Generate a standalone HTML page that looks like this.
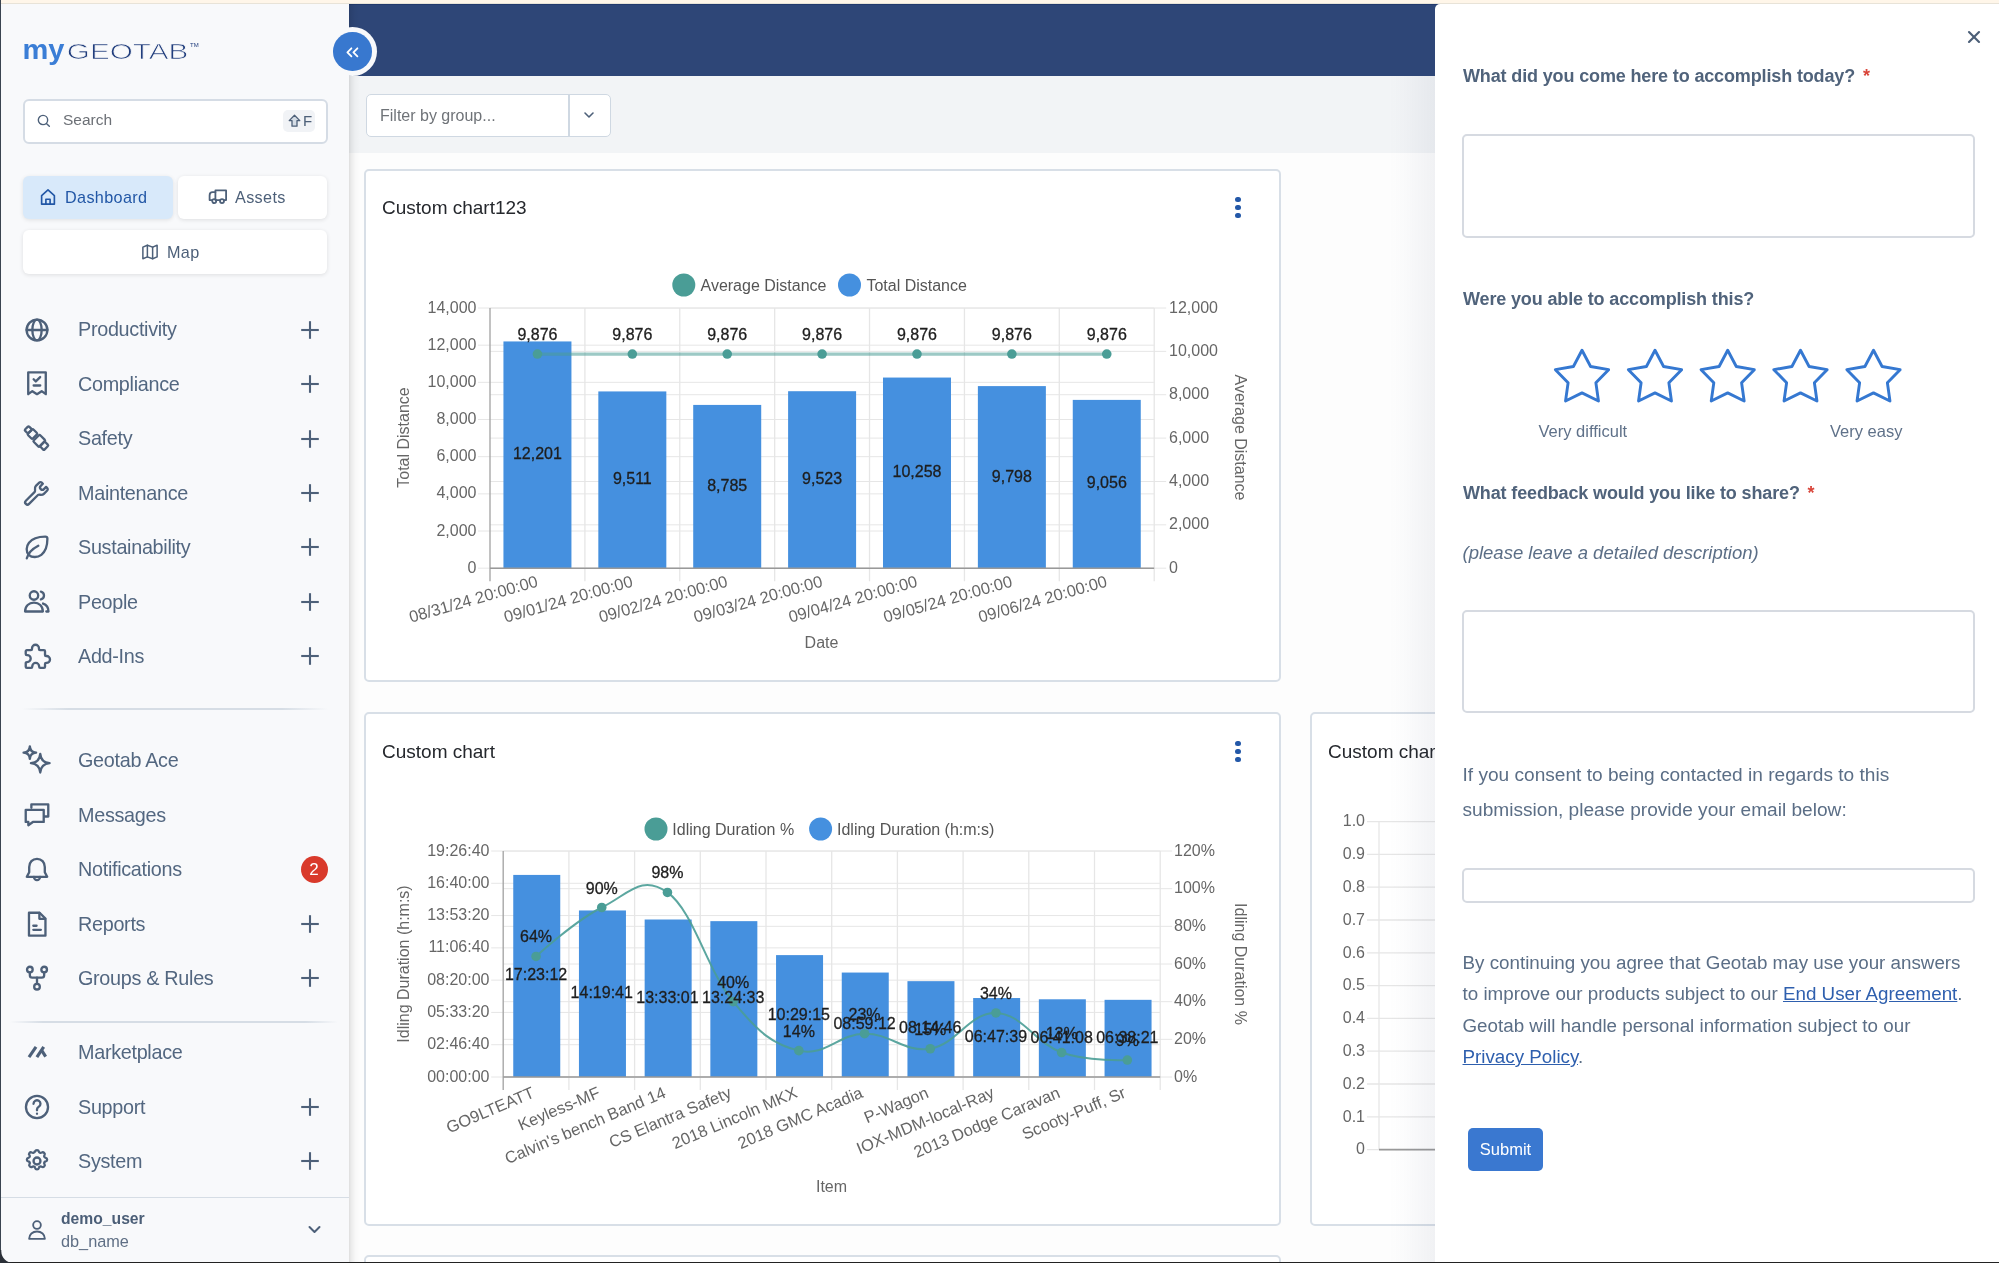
<!DOCTYPE html><html><head><meta charset="utf-8"><title>MyGeotab</title><style>
*{margin:0;padding:0;box-sizing:border-box}
html,body{width:1999px;height:1263px;overflow:hidden;background:#fdfdfd;font-family:"Liberation Sans",sans-serif}
.wrap{position:absolute;left:0;top:0;width:1999px;height:1263px;will-change:transform}
.abs{position:absolute}
.nav{font-size:19.8px;color:#536780;line-height:23px;white-space:nowrap;letter-spacing:-0.3px}
.badge{width:27px;height:27px;border-radius:50%;background:#d93a2b;color:#fff;font-size:17px;line-height:27px;text-align:center}
.card{position:absolute;background:#fff;border:2px solid #d8dfe7;border-radius:5px}
.ctitle{position:absolute;font-size:19px;color:#25282d;white-space:nowrap;line-height:22px}
svg text{font-family:"Liberation Sans",sans-serif}
.al{font-size:16px;fill:#666}
.dl{font-size:16px;fill:#1e1e1e;stroke:#1e1e1e;stroke-width:0.3px}
.at{font-size:16px;fill:#666}
.lg{font-size:16px;fill:#555}
.plab{position:absolute;left:1463px;font-size:18px;font-weight:bold;color:#50637b;letter-spacing:-0.14px;white-space:nowrap;line-height:22px}
.ptxt{position:absolute;left:1462.5px;font-size:18.8px;color:#5b6e86;white-space:nowrap;line-height:22px}
.req{color:#d9463b;margin-left:3px}
.inp{position:absolute;left:1462px;width:513px;background:#fff;border:2px solid #d6dae1;border-radius:5px}
a{color:#2e5fae;text-decoration:underline}
</style></head><body><div class="wrap">
<div class="abs" style="left:349px;top:76px;width:1086px;height:77px;background:#f2f4f6"></div>
<div class="abs" style="left:349px;top:4px;width:1150px;height:72px;background:#2e4677"></div>
<div class="abs" style="left:349px;top:4px;width:1150px;height:1.2px;background:#223a6c"></div>
<div class="abs" style="left:349px;top:4px;width:11px;height:1259px;background:linear-gradient(to right,rgba(0,0,0,0.12),rgba(0,0,0,0.07) 20%,rgba(0,0,0,0.025) 55%,rgba(0,0,0,0))"></div>
<div class="abs" style="left:366px;top:94px;width:245px;height:43px;background:#fff;border:1.5px solid #cfd8e2;border-radius:5px"></div>
<div class="abs" style="left:568px;top:95px;width:1.5px;height:41px;background:#cfd8e2"></div>
<div class="abs" style="left:380px;top:105.3px;font-size:16px;color:#6f7378;line-height:22px;white-space:nowrap">Filter by group...</div>
<svg class="abs" style="left:583px;top:110px" width="12" height="10" viewBox="0 0 12 10" fill="none" stroke="#4d6079" stroke-width="1.6" stroke-linecap="round" stroke-linejoin="round"><path d="M2 3L6 7L10 3"/></svg>
<div class="card" style="left:364px;top:168.5px;width:916.5px;height:513.5px"></div>
<div class="card" style="left:364px;top:711.8px;width:916.5px;height:514px"></div>
<div class="card" style="left:1309.7px;top:711.8px;width:500px;height:514px"></div>
<div class="card" style="left:364px;top:1255px;width:916.5px;height:100px"></div>
<div class="ctitle" style="left:382px;top:197.2px">Custom chart123</div>
<div class="ctitle" style="left:382px;top:741px">Custom chart</div>
<div class="ctitle" style="left:1328px;top:741px">Custom chart</div>
<div class="abs" style="left:1235.3px;top:196.7px;width:5.6px;height:5.6px;border-radius:50%;background:#2358a8"></div>
<div class="abs" style="left:1235.3px;top:204.7px;width:5.6px;height:5.6px;border-radius:50%;background:#2358a8"></div>
<div class="abs" style="left:1235.3px;top:212.7px;width:5.6px;height:5.6px;border-radius:50%;background:#2358a8"></div>
<div class="abs" style="left:1235.3px;top:740.7px;width:5.6px;height:5.6px;border-radius:50%;background:#2358a8"></div>
<div class="abs" style="left:1235.3px;top:748.7px;width:5.6px;height:5.6px;border-radius:50%;background:#2358a8"></div>
<div class="abs" style="left:1235.3px;top:756.7px;width:5.6px;height:5.6px;border-radius:50%;background:#2358a8"></div>
<svg class="abs" style="left:0;top:0" width="1999" height="1263" viewBox="0 0 1999 1263"><line x1="478" y1="568.2" x2="1154.2" y2="568.2" stroke="#e6e6e6" stroke-width="1"/>
<text x="476.5" y="572.8" text-anchor="end" class="al">0</text>
<line x1="478" y1="531.03" x2="1154.2" y2="531.03" stroke="#e6e6e6" stroke-width="1"/>
<text x="476.5" y="535.63" text-anchor="end" class="al">2,000</text>
<line x1="478" y1="493.86" x2="1154.2" y2="493.86" stroke="#e6e6e6" stroke-width="1"/>
<text x="476.5" y="498.46" text-anchor="end" class="al">4,000</text>
<line x1="478" y1="456.69" x2="1154.2" y2="456.69" stroke="#e6e6e6" stroke-width="1"/>
<text x="476.5" y="461.29" text-anchor="end" class="al">6,000</text>
<line x1="478" y1="419.51" x2="1154.2" y2="419.51" stroke="#e6e6e6" stroke-width="1"/>
<text x="476.5" y="424.11" text-anchor="end" class="al">8,000</text>
<line x1="478" y1="382.34" x2="1154.2" y2="382.34" stroke="#e6e6e6" stroke-width="1"/>
<text x="476.5" y="386.94" text-anchor="end" class="al">10,000</text>
<line x1="478" y1="345.17" x2="1154.2" y2="345.17" stroke="#e6e6e6" stroke-width="1"/>
<text x="476.5" y="349.77" text-anchor="end" class="al">12,000</text>
<line x1="478" y1="308" x2="1154.2" y2="308" stroke="#e6e6e6" stroke-width="1"/>
<text x="476.5" y="312.6" text-anchor="end" class="al">14,000</text>
<line x1="490" y1="568.2" x2="1166.2" y2="568.2" stroke="#e6e6e6" stroke-width="1"/>
<text x="1169" y="572.8" class="al">0</text>
<line x1="490" y1="524.83" x2="1166.2" y2="524.83" stroke="#e6e6e6" stroke-width="1"/>
<text x="1169" y="529.43" class="al">2,000</text>
<line x1="490" y1="481.47" x2="1166.2" y2="481.47" stroke="#e6e6e6" stroke-width="1"/>
<text x="1169" y="486.07" class="al">4,000</text>
<line x1="490" y1="438.1" x2="1166.2" y2="438.1" stroke="#e6e6e6" stroke-width="1"/>
<text x="1169" y="442.7" class="al">6,000</text>
<line x1="490" y1="394.73" x2="1166.2" y2="394.73" stroke="#e6e6e6" stroke-width="1"/>
<text x="1169" y="399.33" class="al">8,000</text>
<line x1="490" y1="351.37" x2="1166.2" y2="351.37" stroke="#e6e6e6" stroke-width="1"/>
<text x="1169" y="355.97" class="al">10,000</text>
<line x1="490" y1="308" x2="1166.2" y2="308" stroke="#e6e6e6" stroke-width="1"/>
<text x="1169" y="312.6" class="al">12,000</text>
<line x1="584.89" y1="308" x2="584.89" y2="581.2" stroke="#e6e6e6" stroke-width="1.3"/>
<line x1="679.77" y1="308" x2="679.77" y2="581.2" stroke="#e6e6e6" stroke-width="1.3"/>
<line x1="774.66" y1="308" x2="774.66" y2="581.2" stroke="#e6e6e6" stroke-width="1.3"/>
<line x1="869.54" y1="308" x2="869.54" y2="581.2" stroke="#e6e6e6" stroke-width="1.3"/>
<line x1="964.43" y1="308" x2="964.43" y2="581.2" stroke="#e6e6e6" stroke-width="1.3"/>
<line x1="1059.31" y1="308" x2="1059.31" y2="581.2" stroke="#e6e6e6" stroke-width="1.3"/>
<line x1="1154.2" y1="308" x2="1154.2" y2="581.2" stroke="#e6e6e6" stroke-width="1.3"/>
<line x1="490" y1="308" x2="490" y2="581.2" stroke="#a8a8a8" stroke-width="1.4"/>
<rect x="503.44" y="341.44" width="68" height="226.76" fill="#4590df"/>
<rect x="598.33" y="391.43" width="68" height="176.77" fill="#4590df"/>
<rect x="693.21" y="404.92" width="68" height="163.28" fill="#4590df"/>
<rect x="788.1" y="391.21" width="68" height="176.99" fill="#4590df"/>
<rect x="882.99" y="377.55" width="68" height="190.65" fill="#4590df"/>
<rect x="977.87" y="386.1" width="68" height="182.1" fill="#4590df"/>
<rect x="1072.76" y="399.89" width="68" height="168.31" fill="#4590df"/>
<line x1="490" y1="568.2" x2="1154.2" y2="568.2" stroke="#999" stroke-width="1.6"/>
<path d="M537.44 354.06 L632.33 354.06 L727.21 354.06 L822.1 354.06 L916.99 354.06 L1011.87 354.06 L1106.76 354.06" fill="none" stroke="#4a9d96" stroke-opacity="0.55" stroke-width="3.2"/>
<circle cx="537.44" cy="354.06" r="4.8" fill="#4a9d96"/>
<circle cx="632.33" cy="354.06" r="4.8" fill="#4a9d96"/>
<circle cx="727.21" cy="354.06" r="4.8" fill="#4a9d96"/>
<circle cx="822.1" cy="354.06" r="4.8" fill="#4a9d96"/>
<circle cx="916.99" cy="354.06" r="4.8" fill="#4a9d96"/>
<circle cx="1011.87" cy="354.06" r="4.8" fill="#4a9d96"/>
<circle cx="1106.76" cy="354.06" r="4.8" fill="#4a9d96"/>
<text x="537.44" y="459.22" text-anchor="middle" class="dl">12,201</text>
<text x="632.33" y="484.22" text-anchor="middle" class="dl">9,511</text>
<text x="727.21" y="490.96" text-anchor="middle" class="dl">8,785</text>
<text x="822.1" y="484.1" text-anchor="middle" class="dl">9,523</text>
<text x="916.99" y="477.27" text-anchor="middle" class="dl">10,258</text>
<text x="1011.87" y="481.55" text-anchor="middle" class="dl">9,798</text>
<text x="1106.76" y="488.44" text-anchor="middle" class="dl">9,056</text>
<text x="537.44" y="339.56" text-anchor="middle" class="dl">9,876</text>
<text x="632.33" y="339.56" text-anchor="middle" class="dl">9,876</text>
<text x="727.21" y="339.56" text-anchor="middle" class="dl">9,876</text>
<text x="822.1" y="339.56" text-anchor="middle" class="dl">9,876</text>
<text x="916.99" y="339.56" text-anchor="middle" class="dl">9,876</text>
<text x="1011.87" y="339.56" text-anchor="middle" class="dl">9,876</text>
<text x="1106.76" y="339.56" text-anchor="middle" class="dl">9,876</text>
<text x="538.84" y="586.2" text-anchor="end" class="al" style="font-size:16.5px" transform="rotate(-16 538.84 586.2)">08/31/24 20:00:00</text>
<text x="633.73" y="586.2" text-anchor="end" class="al" style="font-size:16.5px" transform="rotate(-16 633.73 586.2)">09/01/24 20:00:00</text>
<text x="728.61" y="586.2" text-anchor="end" class="al" style="font-size:16.5px" transform="rotate(-16 728.61 586.2)">09/02/24 20:00:00</text>
<text x="823.5" y="586.2" text-anchor="end" class="al" style="font-size:16.5px" transform="rotate(-16 823.5 586.2)">09/03/24 20:00:00</text>
<text x="918.39" y="586.2" text-anchor="end" class="al" style="font-size:16.5px" transform="rotate(-16 918.39 586.2)">09/04/24 20:00:00</text>
<text x="1013.27" y="586.2" text-anchor="end" class="al" style="font-size:16.5px" transform="rotate(-16 1013.27 586.2)">09/05/24 20:00:00</text>
<text x="1108.16" y="586.2" text-anchor="end" class="al" style="font-size:16.5px" transform="rotate(-16 1108.16 586.2)">09/06/24 20:00:00</text>
<text x="409" y="437.5" text-anchor="middle" class="at" transform="rotate(-90 409 437.5)">Total Distance</text>
<text x="1235" y="437.5" text-anchor="middle" class="at" transform="rotate(90 1235 437.5)">Average Distance</text>
<text x="821.5" y="648" text-anchor="middle" class="at">Date</text>
<circle cx="683.8" cy="285" r="11.5" fill="#4a9d96"/>
<text x="700.5" y="290.8" class="lg">Average Distance</text>
<circle cx="849.5" cy="285" r="11.5" fill="#4590df"/>
<text x="866.4" y="290.8" class="lg">Total Distance</text>
<line x1="491.2" y1="1077" x2="1160.2" y2="1077" stroke="#e6e6e6" stroke-width="1"/>
<text x="489.5" y="1081.6" text-anchor="end" class="al">00:00:00</text>
<line x1="491.2" y1="1044.71" x2="1160.2" y2="1044.71" stroke="#e6e6e6" stroke-width="1"/>
<text x="489.5" y="1049.31" text-anchor="end" class="al">02:46:40</text>
<line x1="491.2" y1="1012.43" x2="1160.2" y2="1012.43" stroke="#e6e6e6" stroke-width="1"/>
<text x="489.5" y="1017.03" text-anchor="end" class="al">05:33:20</text>
<line x1="491.2" y1="980.14" x2="1160.2" y2="980.14" stroke="#e6e6e6" stroke-width="1"/>
<text x="489.5" y="984.74" text-anchor="end" class="al">08:20:00</text>
<line x1="491.2" y1="947.86" x2="1160.2" y2="947.86" stroke="#e6e6e6" stroke-width="1"/>
<text x="489.5" y="952.46" text-anchor="end" class="al">11:06:40</text>
<line x1="491.2" y1="915.57" x2="1160.2" y2="915.57" stroke="#e6e6e6" stroke-width="1"/>
<text x="489.5" y="920.17" text-anchor="end" class="al">13:53:20</text>
<line x1="491.2" y1="883.29" x2="1160.2" y2="883.29" stroke="#e6e6e6" stroke-width="1"/>
<text x="489.5" y="887.89" text-anchor="end" class="al">16:40:00</text>
<line x1="491.2" y1="851" x2="1160.2" y2="851" stroke="#e6e6e6" stroke-width="1"/>
<text x="489.5" y="855.6" text-anchor="end" class="al">19:26:40</text>
<line x1="503.2" y1="1077" x2="1172.2" y2="1077" stroke="#e6e6e6" stroke-width="1"/>
<text x="1174" y="1081.6" class="al">0%</text>
<line x1="503.2" y1="1039.33" x2="1172.2" y2="1039.33" stroke="#e6e6e6" stroke-width="1"/>
<text x="1174" y="1043.93" class="al">20%</text>
<line x1="503.2" y1="1001.67" x2="1172.2" y2="1001.67" stroke="#e6e6e6" stroke-width="1"/>
<text x="1174" y="1006.27" class="al">40%</text>
<line x1="503.2" y1="964" x2="1172.2" y2="964" stroke="#e6e6e6" stroke-width="1"/>
<text x="1174" y="968.6" class="al">60%</text>
<line x1="503.2" y1="926.33" x2="1172.2" y2="926.33" stroke="#e6e6e6" stroke-width="1"/>
<text x="1174" y="930.93" class="al">80%</text>
<line x1="503.2" y1="888.67" x2="1172.2" y2="888.67" stroke="#e6e6e6" stroke-width="1"/>
<text x="1174" y="893.27" class="al">100%</text>
<line x1="503.2" y1="851" x2="1172.2" y2="851" stroke="#e6e6e6" stroke-width="1"/>
<text x="1174" y="855.6" class="al">120%</text>
<line x1="568.9" y1="851" x2="568.9" y2="1090" stroke="#e6e6e6" stroke-width="1.3"/>
<line x1="634.6" y1="851" x2="634.6" y2="1090" stroke="#e6e6e6" stroke-width="1.3"/>
<line x1="700.3" y1="851" x2="700.3" y2="1090" stroke="#e6e6e6" stroke-width="1.3"/>
<line x1="766" y1="851" x2="766" y2="1090" stroke="#e6e6e6" stroke-width="1.3"/>
<line x1="831.7" y1="851" x2="831.7" y2="1090" stroke="#e6e6e6" stroke-width="1.3"/>
<line x1="897.4" y1="851" x2="897.4" y2="1090" stroke="#e6e6e6" stroke-width="1.3"/>
<line x1="963.1" y1="851" x2="963.1" y2="1090" stroke="#e6e6e6" stroke-width="1.3"/>
<line x1="1028.8" y1="851" x2="1028.8" y2="1090" stroke="#e6e6e6" stroke-width="1.3"/>
<line x1="1094.5" y1="851" x2="1094.5" y2="1090" stroke="#e6e6e6" stroke-width="1.3"/>
<line x1="1160.2" y1="851" x2="1160.2" y2="1090" stroke="#e6e6e6" stroke-width="1.3"/>
<line x1="503.2" y1="851" x2="503.2" y2="1090" stroke="#a8a8a8" stroke-width="1.4"/>
<rect x="513.25" y="874.92" width="47" height="202.08" fill="#4590df"/>
<rect x="578.95" y="910.47" width="47" height="166.53" fill="#4590df"/>
<rect x="644.65" y="919.51" width="47" height="157.49" fill="#4590df"/>
<rect x="710.35" y="921.15" width="47" height="155.85" fill="#4590df"/>
<rect x="776.05" y="955.11" width="47" height="121.89" fill="#4590df"/>
<rect x="841.75" y="972.55" width="47" height="104.45" fill="#4590df"/>
<rect x="907.45" y="981.16" width="47" height="95.84" fill="#4590df"/>
<rect x="973.15" y="998.03" width="47" height="78.97" fill="#4590df"/>
<rect x="1038.85" y="999.29" width="47" height="77.71" fill="#4590df"/>
<rect x="1104.55" y="999.83" width="47" height="77.17" fill="#4590df"/>
<line x1="503.2" y1="1077" x2="1160.2" y2="1077" stroke="#999" stroke-width="1.6"/>
<path d="M536.05 956.47 C536.05 956.47 575.47 920.31 601.75 907.5 C628.03 894.69 641.17 873.6 667.45 892.43 C693.73 911.27 706.87 970.03 733.15 1001.67 C759.43 1033.31 772.57 1044.23 798.85 1050.63 C825.13 1057.04 838.27 1034.06 864.55 1033.68 C890.83 1033.31 903.97 1052.89 930.25 1048.75 C956.53 1044.61 969.67 1012.21 995.95 1012.97 C1022.23 1013.72 1035.37 1043.1 1061.65 1052.52 C1087.93 1061.93 1127.35 1060.05 1127.35 1060.05" fill="none" stroke="#4a9d96" stroke-opacity="0.9" stroke-width="2"/>
<circle cx="536.05" cy="956.47" r="4.8" fill="#4a9d96"/>
<circle cx="601.75" cy="907.5" r="4.8" fill="#4a9d96"/>
<circle cx="667.45" cy="892.43" r="4.8" fill="#4a9d96"/>
<circle cx="733.15" cy="1001.67" r="4.8" fill="#4a9d96"/>
<circle cx="798.85" cy="1050.63" r="4.8" fill="#4a9d96"/>
<circle cx="864.55" cy="1033.68" r="4.8" fill="#4a9d96"/>
<circle cx="930.25" cy="1048.75" r="4.8" fill="#4a9d96"/>
<circle cx="995.95" cy="1012.97" r="4.8" fill="#4a9d96"/>
<circle cx="1061.65" cy="1052.52" r="4.8" fill="#4a9d96"/>
<circle cx="1127.35" cy="1060.05" r="4.8" fill="#4a9d96"/>
<text x="536.05" y="980.36" text-anchor="middle" class="dl">17:23:12</text>
<text x="601.75" y="998.13" text-anchor="middle" class="dl">14:19:41</text>
<text x="667.45" y="1002.65" text-anchor="middle" class="dl">13:33:01</text>
<text x="733.15" y="1003.47" text-anchor="middle" class="dl">13:24:33</text>
<text x="798.85" y="1020.45" text-anchor="middle" class="dl">10:29:15</text>
<text x="864.55" y="1029.17" text-anchor="middle" class="dl">08:59:12</text>
<text x="930.25" y="1033.48" text-anchor="middle" class="dl">08:14:46</text>
<text x="995.95" y="1041.92" text-anchor="middle" class="dl">06:47:39</text>
<text x="1061.65" y="1042.55" text-anchor="middle" class="dl">06:41:08</text>
<text x="1127.35" y="1042.82" text-anchor="middle" class="dl">06:38:21</text>
<text x="536.05" y="942.47" text-anchor="middle" class="dl">64%</text>
<text x="601.75" y="893.5" text-anchor="middle" class="dl">90%</text>
<text x="667.45" y="878.43" text-anchor="middle" class="dl">98%</text>
<text x="733.15" y="987.67" text-anchor="middle" class="dl">40%</text>
<text x="798.85" y="1036.63" text-anchor="middle" class="dl">14%</text>
<text x="864.55" y="1019.68" text-anchor="middle" class="dl">23%</text>
<text x="930.25" y="1034.75" text-anchor="middle" class="dl">15%</text>
<text x="995.95" y="998.97" text-anchor="middle" class="dl">34%</text>
<text x="1061.65" y="1038.52" text-anchor="middle" class="dl">13%</text>
<text x="1127.35" y="1046.05" text-anchor="middle" class="dl">9%</text>
<text x="535.55" y="1096.8" text-anchor="end" class="al" style="font-size:16.5px" transform="rotate(-23 535.55 1096.8)">GO9LTEATT</text>
<text x="601.25" y="1096.8" text-anchor="end" class="al" style="font-size:16.5px" transform="rotate(-23 601.25 1096.8)">Keyless-MF</text>
<text x="666.95" y="1096.8" text-anchor="end" class="al" style="font-size:16.5px" transform="rotate(-23 666.95 1096.8)">Calvin's bench Band 14</text>
<text x="732.65" y="1096.8" text-anchor="end" class="al" style="font-size:16.5px" transform="rotate(-23 732.65 1096.8)">CS Elantra Safety</text>
<text x="798.35" y="1096.8" text-anchor="end" class="al" style="font-size:16.5px" transform="rotate(-23 798.35 1096.8)">2018 Lincoln MKX</text>
<text x="864.05" y="1096.8" text-anchor="end" class="al" style="font-size:16.5px" transform="rotate(-23 864.05 1096.8)">2018 GMC Acadia</text>
<text x="929.75" y="1096.8" text-anchor="end" class="al" style="font-size:16.5px" transform="rotate(-23 929.75 1096.8)">P-Wagon</text>
<text x="995.45" y="1096.8" text-anchor="end" class="al" style="font-size:16.5px" transform="rotate(-23 995.45 1096.8)">IOX-MDM-local-Ray</text>
<text x="1061.15" y="1096.8" text-anchor="end" class="al" style="font-size:16.5px" transform="rotate(-23 1061.15 1096.8)">2013 Dodge Caravan</text>
<text x="1126.85" y="1096.8" text-anchor="end" class="al" style="font-size:16.5px" transform="rotate(-23 1126.85 1096.8)">Scooty-Puff, Sr</text>
<text x="409" y="964" text-anchor="middle" class="at" transform="rotate(-90 409 964)">Idling Duration (h:m:s)</text>
<text x="1235" y="964" text-anchor="middle" class="at" transform="rotate(90 1235 964)">Idling Duration %</text>
<text x="831.5" y="1192" text-anchor="middle" class="at">Item</text>
<circle cx="656" cy="829" r="11.5" fill="#4a9d96"/>
<text x="672.3" y="834.8" class="lg">Idling Duration %</text>
<circle cx="820.6" cy="829" r="11.5" fill="#4590df"/>
<text x="837" y="834.8" class="lg">Idling Duration (h:m:s)</text>
<line x1="1367" y1="1149.6" x2="1440" y2="1149.6" stroke="#e6e6e6" stroke-width="1.3"/>
<text x="1365" y="1154.3" text-anchor="end" class="al">0</text>
<line x1="1367" y1="1116.8" x2="1440" y2="1116.8" stroke="#e6e6e6" stroke-width="1.3"/>
<text x="1365" y="1121.5" text-anchor="end" class="al">0.1</text>
<line x1="1367" y1="1084" x2="1440" y2="1084" stroke="#e6e6e6" stroke-width="1.3"/>
<text x="1365" y="1088.7" text-anchor="end" class="al">0.2</text>
<line x1="1367" y1="1051.2" x2="1440" y2="1051.2" stroke="#e6e6e6" stroke-width="1.3"/>
<text x="1365" y="1055.9" text-anchor="end" class="al">0.3</text>
<line x1="1367" y1="1018.4" x2="1440" y2="1018.4" stroke="#e6e6e6" stroke-width="1.3"/>
<text x="1365" y="1023.1" text-anchor="end" class="al">0.4</text>
<line x1="1367" y1="985.6" x2="1440" y2="985.6" stroke="#e6e6e6" stroke-width="1.3"/>
<text x="1365" y="990.3" text-anchor="end" class="al">0.5</text>
<line x1="1367" y1="952.8" x2="1440" y2="952.8" stroke="#e6e6e6" stroke-width="1.3"/>
<text x="1365" y="957.5" text-anchor="end" class="al">0.6</text>
<line x1="1367" y1="920" x2="1440" y2="920" stroke="#e6e6e6" stroke-width="1.3"/>
<text x="1365" y="924.7" text-anchor="end" class="al">0.7</text>
<line x1="1367" y1="887.2" x2="1440" y2="887.2" stroke="#e6e6e6" stroke-width="1.3"/>
<text x="1365" y="891.9" text-anchor="end" class="al">0.8</text>
<line x1="1367" y1="854.4" x2="1440" y2="854.4" stroke="#e6e6e6" stroke-width="1.3"/>
<text x="1365" y="859.1" text-anchor="end" class="al">0.9</text>
<line x1="1367" y1="821.6" x2="1440" y2="821.6" stroke="#e6e6e6" stroke-width="1.3"/>
<text x="1365" y="826.3" text-anchor="end" class="al">1.0</text>
<line x1="1379" y1="821.6" x2="1379" y2="1149.6" stroke="#e6e6e6" stroke-width="1.3"/>
<line x1="1379" y1="1149.6" x2="1440" y2="1149.6" stroke="#999" stroke-width="1.6"/></svg>
<div class="abs" style="left:0;top:0;width:349px;height:1263px;background:#f8f9fb;border-right:0px solid #e3e6ea"></div>
<svg class="abs" style="left:20px;top:36px" width="185" height="34" viewBox="0 0 185 34"><text x="2.5" y="23" font-family="Liberation Sans" font-weight="bold" font-size="28.5" fill="#3b7ed6" textLength="42" lengthAdjust="spacingAndGlyphs">my</text><text x="46.8" y="23.2" font-family="Liberation Sans" font-size="22.4" fill="#213e7d" stroke="#f8f9fb" stroke-width="0.7" textLength="121.5" lengthAdjust="spacingAndGlyphs">GEOTAB</text><text x="170" y="11" font-family="Liberation Sans" font-size="6" fill="#1f3c7c">TM</text></svg>
<div class="abs" style="left:22.5px;top:98.5px;width:305px;height:45px;background:#fff;border:2px solid #d5dce5;border-radius:6px"></div>
<svg class="abs" style="left:35.5px;top:113px" width="16" height="16" viewBox="0 0 24 24" fill="none" stroke="#4d6079" stroke-width="2.1" stroke-linecap="round" stroke-linejoin="round" overflow="visible"><circle cx="10.5" cy="10.5" r="7"/><line x1="15.6" y1="15.6" x2="20" y2="20"/></svg>
<div class="abs" style="left:63px;top:109px;font-size:15.5px;color:#6c7076;line-height:22px">Search</div>
<div class="abs" style="left:283px;top:110px;width:32px;height:22px;background:#f1f3f6;border-radius:5px"></div>
<svg class="abs" style="left:288px;top:113.5px" width="13" height="14" viewBox="0 0 13 14" fill="#d5dde6" stroke="#4d6079" stroke-width="1.3" stroke-linejoin="round"><path d="M6.5 1.2L11.8 6.6H9V12.2H4V6.6H1.2Z"/></svg>
<div class="abs" style="left:303px;top:109.5px;font-size:15px;color:#4d6079;line-height:22px">F</div>
<div class="abs" style="left:23px;top:175.5px;width:150px;height:43.5px;background:#d8e9fa;border-radius:6px;box-shadow:0 1px 4px rgba(0,0,0,0.10)"></div>
<div class="abs" style="left:178px;top:175.5px;width:149px;height:43.5px;background:#fff;border-radius:6px;box-shadow:0 1px 4px rgba(0,0,0,0.11)"></div>
<div class="abs" style="left:23px;top:230px;width:304px;height:43.5px;background:#fff;border-radius:6px;box-shadow:0 1px 4px rgba(0,0,0,0.11)"></div>
<svg class="abs" style="left:39px;top:188px" width="18" height="18" viewBox="0 0 24 24" fill="none" stroke="#2257a6" stroke-width="2.2" stroke-linecap="round" stroke-linejoin="round" overflow="visible"><path d="M3.5 21.5V10.2L12 2.5L20.5 10.2V21.5Z"/><path d="M9.2 21.5V15H14.8V21.5"/></svg>
<div class="abs" style="left:65px;top:185.5px;font-size:16.2px;color:#2257a6;line-height:22px;letter-spacing:0.35px">Dashboard</div>
<svg class="abs" style="left:208px;top:188px" width="20" height="18" viewBox="0 0 20 18" fill="none" stroke="#4d6079" stroke-width="1.8" stroke-linecap="round" stroke-linejoin="round"><path d="M7.4 12.1V2.4H18.1V12.1H16.2"/><path d="M7.4 4.2H4.6C2.9 4.2 1.6 5.6 1.6 7.4V12.1H4.1"/><line x1="8.3" y1="12.1" x2="11.9" y2="12.1"/><circle cx="6.2" cy="13.1" r="2"/><circle cx="14" cy="13.1" r="2"/></svg>
<div class="abs" style="left:235px;top:185.5px;font-size:16.2px;color:#4d6079;line-height:22px;letter-spacing:0.35px">Assets</div>
<svg class="abs" style="left:140.5px;top:242.5px" width="18" height="18" viewBox="0 0 24 24" fill="none" stroke="#4d6079" stroke-width="2" stroke-linecap="round" stroke-linejoin="round" overflow="visible"><path d="M2.5 5.5l6-2.5 7 2.5 6-2.5v15.5l-6 2.5-7-2.5-6 2.5z"/><line x1="8.5" y1="3" x2="8.5" y2="18.5"/><line x1="15.5" y1="5.5" x2="15.5" y2="21"/></svg>
<div class="abs" style="left:167px;top:240.5px;font-size:16.2px;color:#4d6079;line-height:22px;letter-spacing:0.35px">Map</div>
<svg class="abs" style="left:23.5px;top:316.5px" width="26" height="26" viewBox="0 0 24 24" fill="none" stroke="#4d6079" stroke-width="2.15" stroke-linecap="round" stroke-linejoin="round" overflow="visible"><circle cx="12" cy="12" r="9.6"/><line x1="2.4" y1="12" x2="21.6" y2="12"/><ellipse cx="12" cy="12" rx="4.3" ry="9.6"/></svg><div class="abs nav" style="left:78px;top:318.4px">Productivity</div><svg class="abs" style="left:299.8px;top:319.5px" width="20" height="20" viewBox="0 0 20 20" stroke="#4d6079" stroke-width="2.1"><line x1="10" y1="1.2" x2="10" y2="18.8"/><line x1="1.2" y1="10" x2="18.8" y2="10"/></svg>
<svg class="abs" style="left:23.5px;top:371px" width="26" height="26" viewBox="0 0 24 24" fill="none" stroke="#4d6079" stroke-width="2.15" stroke-linecap="round" stroke-linejoin="round" overflow="visible"><path d="M3.9 1.2H20.1V21.4L16.3 18.6L12 21.4L7.7 18.6L3.9 21.4Z"/><path d="M8.9 7.6L10.9 9.6L14.9 5.6"/><line x1="8.9" y1="13.4" x2="15" y2="13.4"/></svg><div class="abs nav" style="left:78px;top:372.9px">Compliance</div><svg class="abs" style="left:299.8px;top:374px" width="20" height="20" viewBox="0 0 20 20" stroke="#4d6079" stroke-width="2.1"><line x1="10" y1="1.2" x2="10" y2="18.8"/><line x1="1.2" y1="10" x2="18.8" y2="10"/></svg>
<svg class="abs" style="left:23.5px;top:425.5px" width="26" height="26" viewBox="0 0 24 24" fill="none" stroke="#4d6079" stroke-width="2.15" stroke-linecap="round" stroke-linejoin="round" overflow="visible"><g transform="translate(12.6 12.2) rotate(45)"><rect x="-14.6" y="-2.7" width="4.6" height="5.4" rx="1.1"/><rect x="-10" y="-3.6" width="6.4" height="7.2" rx="1.2"/><rect x="-1.8" y="-4.3" width="7.8" height="8.6" rx="1.2"/><rect x="6" y="-3.1" width="5.2" height="6.2" rx="1.1"/></g></svg><div class="abs nav" style="left:78px;top:427.4px">Safety</div><svg class="abs" style="left:299.8px;top:428.5px" width="20" height="20" viewBox="0 0 20 20" stroke="#4d6079" stroke-width="2.1"><line x1="10" y1="1.2" x2="10" y2="18.8"/><line x1="1.2" y1="10" x2="18.8" y2="10"/></svg>
<svg class="abs" style="left:23.5px;top:480px" width="26" height="26" viewBox="0 0 24 24" fill="none" stroke="#4d6079" stroke-width="2.15" stroke-linecap="round" stroke-linejoin="round" overflow="visible"><g transform="translate(3.2 20.6) rotate(-45)"><path d="M0 -2.1H11.6C13 -2.1 13.6 -5.2 16.2 -5.2H20.6A1.6 1.6 0 0 1 22.2 -3.6V-2.1H19.4A2.1 2.1 0 0 0 19.4 2.1H22.2V3.6A1.6 1.6 0 0 1 20.6 5.2H16.2C13.6 5.2 13 2.1 11.6 2.1H0A2.1 2.1 0 0 1 0 -2.1Z"/></g></svg><div class="abs nav" style="left:78px;top:481.9px">Maintenance</div><svg class="abs" style="left:299.8px;top:483px" width="20" height="20" viewBox="0 0 20 20" stroke="#4d6079" stroke-width="2.1"><line x1="10" y1="1.2" x2="10" y2="18.8"/><line x1="1.2" y1="10" x2="18.8" y2="10"/></svg>
<svg class="abs" style="left:23.5px;top:534.3px" width="26" height="26" viewBox="0 0 24 24" fill="none" stroke="#4d6079" stroke-width="2.15" stroke-linecap="round" stroke-linejoin="round" overflow="visible"><path d="M2.6 22.4c1.2-4.6 4.4-8.4 10.6-11.6"/><path d="M4.4 19.2c-2.6-3-2.6-7.6.2-11.2C7.4 4.4 12.6 2.4 19.6 2.4c1.6 0 2 .6 2 2 0 7-2 12-5.6 14.8-3.4 2.6-8.6 2.8-11.6 0z"/></svg><div class="abs nav" style="left:78px;top:536.2px">Sustainability</div><svg class="abs" style="left:299.8px;top:537.3px" width="20" height="20" viewBox="0 0 20 20" stroke="#4d6079" stroke-width="2.1"><line x1="10" y1="1.2" x2="10" y2="18.8"/><line x1="1.2" y1="10" x2="18.8" y2="10"/></svg>
<svg class="abs" style="left:23.5px;top:588.7px" width="26" height="26" viewBox="0 0 24 24" fill="none" stroke="#4d6079" stroke-width="2.15" stroke-linecap="round" stroke-linejoin="round" overflow="visible"><circle cx="9.2" cy="6" r="3.9"/><path d="M1 20.8c0-5.2 3.6-8.2 8.2-8.2s8.2 3 8.2 8.2z"/><path d="M15.6 2.4a3.7 3.7 0 0 1 0 7.2"/><path d="M17.6 13.4c3.2 1 5 3.6 5 7.4h-2"/></svg><div class="abs nav" style="left:78px;top:590.6px">People</div><svg class="abs" style="left:299.8px;top:591.7px" width="20" height="20" viewBox="0 0 20 20" stroke="#4d6079" stroke-width="2.1"><line x1="10" y1="1.2" x2="10" y2="18.8"/><line x1="1.2" y1="10" x2="18.8" y2="10"/></svg>
<svg class="abs" style="left:23.5px;top:643px" width="26" height="26" viewBox="0 0 24 24" fill="none" stroke="#4d6079" stroke-width="2.15" stroke-linecap="round" stroke-linejoin="round" overflow="visible"><path d="M2.6 6.6h3.8a1 1 0 0 0 1-1v-.8a3.2 3.2 0 0 1 6.4 0v.8a1 1 0 0 0 1 1h3.6a1 1 0 0 1 1 1v3.4a1 1 0 0 0 1 1h.4a3.2 3.2 0 0 1 0 6.4h-.4a1 1 0 0 0-1 1v2.6a1 1 0 0 1-1 1h-3.4a1 1 0 0 1-1-1v-.4a3.2 3.2 0 0 0-6.4 0v.4a1 1 0 0 1-1 1H2.6a1 1 0 0 1-1-1v-3.4a1 1 0 0 1 1-1h.4a3.2 3.2 0 0 0 0-6.4h-.4a1 1 0 0 1-1-1V7.6a1 1 0 0 1 1-1z"/></svg><div class="abs nav" style="left:78px;top:644.9px">Add-Ins</div><svg class="abs" style="left:299.8px;top:646px" width="20" height="20" viewBox="0 0 20 20" stroke="#4d6079" stroke-width="2.1"><line x1="10" y1="1.2" x2="10" y2="18.8"/><line x1="1.2" y1="10" x2="18.8" y2="10"/></svg>
<svg class="abs" style="left:23.5px;top:747.5px" width="26" height="26" viewBox="0 0 24 24" fill="none" stroke="#4d6079" stroke-width="2.15" stroke-linecap="round" stroke-linejoin="round" overflow="visible"><path d="M5.40 -1.50Q5.70 4.00 11.20 4.30Q5.70 4.60 5.40 10.10Q5.10 4.60 -0.40 4.30Q5.10 4.00 5.40 -1.50Z"/><path d="M15.00 5.40Q15.70 13.30 23.60 14.00Q15.70 14.70 15.00 22.60Q14.30 14.70 6.40 14.00Q14.30 13.30 15.00 5.40Z"/></svg><div class="abs nav" style="left:78px;top:749.4px">Geotab Ace</div>
<svg class="abs" style="left:23.5px;top:801.8px" width="26" height="26" viewBox="0 0 24 24" fill="none" stroke="#4d6079" stroke-width="2.15" stroke-linecap="round" stroke-linejoin="round" overflow="visible"><path d="M6.8 5.4V2.2h15.6v11.2h-3.6"/><path d="M1.6 7.2h16.6v11.2H8.2L4 21.4v-3H1.6z"/></svg><div class="abs nav" style="left:78px;top:803.7px">Messages</div>
<svg class="abs" style="left:23.5px;top:856.2px" width="26" height="26" viewBox="0 0 24 24" fill="none" stroke="#4d6079" stroke-width="2.15" stroke-linecap="round" stroke-linejoin="round" overflow="visible"><path d="M12 2.6c-4.2 0-7.2 3.2-7.2 7.6v4.8L2.6 19.2h18.8l-2.2-4.2v-4.8c0-4.4-3-7.6-7.2-7.6z"/><path d="M9.2 19.4a2.8 2.8 0 0 0 5.6 0"/></svg><div class="abs nav" style="left:78px;top:858.1px">Notifications</div><div class="abs badge" style="left:300.5px;top:855.6px">2</div>
<svg class="abs" style="left:23.5px;top:910.6px" width="26" height="26" viewBox="0 0 24 24" fill="none" stroke="#4d6079" stroke-width="2.15" stroke-linecap="round" stroke-linejoin="round" overflow="visible"><path d="M4.6 1.6h9.8l5.4 5.4v15.8H4.6z"/><path d="M14.2 1.8v5.4h5.4"/><line x1="8.6" y1="13.6" x2="11.6" y2="13.6"/><line x1="8.6" y1="17.4" x2="15.6" y2="17.4"/></svg><div class="abs nav" style="left:78px;top:912.5px">Reports</div><svg class="abs" style="left:299.8px;top:913.6px" width="20" height="20" viewBox="0 0 20 20" stroke="#4d6079" stroke-width="2.1"><line x1="10" y1="1.2" x2="10" y2="18.8"/><line x1="1.2" y1="10" x2="18.8" y2="10"/></svg>
<svg class="abs" style="left:23.5px;top:965px" width="26" height="26" viewBox="0 0 24 24" fill="none" stroke="#4d6079" stroke-width="2.15" stroke-linecap="round" stroke-linejoin="round" overflow="visible"><circle cx="5.4" cy="4.2" r="2.6"/><circle cx="18.6" cy="4.2" r="2.6"/><circle cx="12" cy="20" r="2.6"/><path d="M5.4 6.8v2.6a2.2 2.2 0 0 0 2.2 2.2h8.8a2.2 2.2 0 0 0 2.2-2.2V6.8"/><line x1="12" y1="11.6" x2="12" y2="17.4"/></svg><div class="abs nav" style="left:78px;top:966.9px">Groups & Rules</div><svg class="abs" style="left:299.8px;top:968px" width="20" height="20" viewBox="0 0 20 20" stroke="#4d6079" stroke-width="2.1"><line x1="10" y1="1.2" x2="10" y2="18.8"/><line x1="1.2" y1="10" x2="18.8" y2="10"/></svg>
<svg class="abs" style="left:23.5px;top:1039.5px" width="26" height="26" viewBox="0 0 24 24" fill="none" stroke="#4d6079" stroke-width="2.15" stroke-linecap="round" stroke-linejoin="round" overflow="visible"><g stroke-width="2.9" stroke-linecap="butt"><line x1="4.6" y1="15.8" x2="11.1" y2="6.4"/><line x1="11.9" y1="15.8" x2="18.2" y2="6.4"/><line x1="16.6" y1="10" x2="20" y2="15.4"/></g></svg><div class="abs nav" style="left:78px;top:1041.4px">Marketplace</div>
<svg class="abs" style="left:23.5px;top:1094px" width="26" height="26" viewBox="0 0 24 24" fill="none" stroke="#4d6079" stroke-width="2.15" stroke-linecap="round" stroke-linejoin="round" overflow="visible"><circle cx="12" cy="12" r="10.2"/><path d="M8.8 9a3.2 3.2 0 1 1 4.8 2.8c-1 .6-1.6 1.3-1.6 2.6v.6"/><line x1="12" y1="18.2" x2="12" y2="18.3"/></svg><div class="abs nav" style="left:78px;top:1095.9px">Support</div><svg class="abs" style="left:299.8px;top:1097px" width="20" height="20" viewBox="0 0 20 20" stroke="#4d6079" stroke-width="2.1"><line x1="10" y1="1.2" x2="10" y2="18.8"/><line x1="1.2" y1="10" x2="18.8" y2="10"/></svg>
<svg class="abs" style="left:23.5px;top:1148.3px" width="26" height="26" viewBox="0 0 24 24" fill="none" stroke="#4d6079" stroke-width="2.15" stroke-linecap="round" stroke-linejoin="round" overflow="visible"><path d="M10.3 2.3c.4-1.8 3-1.8 3.4 0a1.7 1.7 0 0 0 2.6 1.1c1.6-1 3.6.9 2.6 2.6a1.7 1.7 0 0 0 1.1 2.6c1.8.4 1.8 3 0 3.4a1.7 1.7 0 0 0-1.1 2.6c1 1.6-.9 3.6-2.6 2.6a1.7 1.7 0 0 0-2.6 1.1c-.4 1.8-3 1.8-3.4 0a1.7 1.7 0 0 0-2.6-1.1c-1.6 1-3.6-.9-2.6-2.6a1.7 1.7 0 0 0-1.1-2.6c-1.8-.4-1.8-3 0-3.4a1.7 1.7 0 0 0 1.1-2.6C3.7 4.4 5.6 2.4 7.3 3.4a1.7 1.7 0 0 0 2.6-1.1z" transform="translate(0 1) scale(1 0.95)"/><circle cx="12" cy="12" r="3.2"/></svg><div class="abs nav" style="left:78px;top:1150.2px">System</div><svg class="abs" style="left:299.8px;top:1151.3px" width="20" height="20" viewBox="0 0 20 20" stroke="#4d6079" stroke-width="2.1"><line x1="10" y1="1.2" x2="10" y2="18.8"/><line x1="1.2" y1="10" x2="18.8" y2="10"/></svg>
<div class="abs" style="left:22px;top:708px;width:306px;height:1.5px;background:linear-gradient(to right,rgba(214,221,229,0),#d6dde5 15%,#d6dde5 85%,rgba(214,221,229,0))"></div>
<div class="abs" style="left:10px;top:1021px;width:328px;height:1.5px;background:linear-gradient(to right,rgba(214,221,229,0),#d6dde5 10%,#d6dde5 90%,rgba(214,221,229,0))"></div>
<div class="abs" style="left:1px;top:1196.5px;width:348px;height:1.8px;background:#d6dde5"></div>
<svg class="abs" style="left:25.5px;top:1219px" width="22" height="22" viewBox="0 0 24 24" fill="none" stroke="#4d6079" stroke-width="2" stroke-linecap="round" stroke-linejoin="round" overflow="visible"><circle cx="12" cy="6.6" r="4.2"/><path d="M3.4 21.6c0-4.8 3.8-8 8.6-8s8.6 3.2 8.6 8z"/></svg>
<div class="abs" style="left:61px;top:1209px;font-size:15.7px;font-weight:bold;color:#4b5e77;line-height:20px">demo_user</div>
<div class="abs" style="left:61px;top:1231px;font-size:16.3px;color:#5f6f85;line-height:20px">db_name</div>
<svg class="abs" style="left:307px;top:1224px" width="15" height="11" viewBox="0 0 15 11" fill="none" stroke="#4d6079" stroke-width="2" stroke-linecap="round" stroke-linejoin="round"><path d="M2.5 3L7.5 8L12.5 3"/></svg>
<div class="abs" style="left:328px;top:27px;width:49px;height:49px;border-radius:50%;background:#f8f9fb"></div>
<div class="abs" style="left:333px;top:32.3px;width:38.5px;height:38.5px;border-radius:50%;background:#3878cf"></div>
<svg class="abs" style="left:345px;top:45.5px" width="16" height="13" viewBox="0 0 16 13" fill="none" stroke="#fff" stroke-width="1.8" stroke-linecap="round" stroke-linejoin="round"><path d="M6.4 2.3L2.4 6.3L6.4 10.3"/><path d="M12.4 2.3L8.4 6.3L12.4 10.3"/></svg>
<div class="abs" style="left:1389px;top:76px;width:46px;height:1187px;background:linear-gradient(to right,rgba(30,45,90,0),rgba(30,45,90,0.012) 30%,rgba(30,45,90,0.035) 65%,rgba(30,45,90,0.055))"></div>
<div class="abs" style="left:1435px;top:4px;width:564px;height:1259px;background:#fff;border-top-left-radius:5px"></div>
<svg class="abs" style="left:1967px;top:30px" width="14" height="14" viewBox="0 0 14 14" stroke="#4b5e77" stroke-width="2.1" stroke-linecap="round"><line x1="2" y1="2" x2="12" y2="12"/><line x1="12" y1="2" x2="2" y2="12"/></svg>
<div class="plab" style="top:64.5px">What did you come here to accomplish today? <span class="req">*</span></div>
<div class="inp" style="top:134.2px;height:103.5px"></div>
<div class="plab" style="top:287.5px">Were you able to accomplish this?</div>
<svg class="abs" style="left:0;top:0" width="1999" height="430" viewBox="0 0 1999 430" fill="none" stroke="#3578d1" stroke-width="2.9" stroke-linejoin="round"><path d="M1582.00 350.30 L1590.58 366.49 L1608.63 369.65 L1595.89 382.81 L1598.46 400.95 L1582.00 392.90 L1565.54 400.95 L1568.11 382.81 L1555.37 369.65 L1573.42 366.49Z"/></svg>
<svg class="abs" style="left:0;top:0" width="1999" height="430" viewBox="0 0 1999 430" fill="none" stroke="#3578d1" stroke-width="2.9" stroke-linejoin="round"><path d="M1655.00 350.30 L1663.58 366.49 L1681.63 369.65 L1668.89 382.81 L1671.46 400.95 L1655.00 392.90 L1638.54 400.95 L1641.11 382.81 L1628.37 369.65 L1646.42 366.49Z"/></svg>
<svg class="abs" style="left:0;top:0" width="1999" height="430" viewBox="0 0 1999 430" fill="none" stroke="#3578d1" stroke-width="2.9" stroke-linejoin="round"><path d="M1727.70 350.30 L1736.28 366.49 L1754.33 369.65 L1741.59 382.81 L1744.16 400.95 L1727.70 392.90 L1711.24 400.95 L1713.81 382.81 L1701.07 369.65 L1719.12 366.49Z"/></svg>
<svg class="abs" style="left:0;top:0" width="1999" height="430" viewBox="0 0 1999 430" fill="none" stroke="#3578d1" stroke-width="2.9" stroke-linejoin="round"><path d="M1800.50 350.30 L1809.08 366.49 L1827.13 369.65 L1814.39 382.81 L1816.96 400.95 L1800.50 392.90 L1784.04 400.95 L1786.61 382.81 L1773.87 369.65 L1791.92 366.49Z"/></svg>
<svg class="abs" style="left:0;top:0" width="1999" height="430" viewBox="0 0 1999 430" fill="none" stroke="#3578d1" stroke-width="2.9" stroke-linejoin="round"><path d="M1873.50 350.30 L1882.08 366.49 L1900.13 369.65 L1887.39 382.81 L1889.96 400.95 L1873.50 392.90 L1857.04 400.95 L1859.61 382.81 L1846.87 369.65 L1864.92 366.49Z"/></svg>
<div class="abs" style="left:1538.5px;top:421px;font-size:16.5px;color:#5f7189;line-height:20px;white-space:nowrap">Very difficult</div>
<div class="abs" style="left:1830px;top:421px;font-size:16.5px;color:#5f7189;line-height:20px;white-space:nowrap">Very easy</div>
<div class="plab" style="top:481.5px">What feedback would you like to share? <span class="req">*</span></div>
<div class="ptxt" style="top:542px;font-style:italic;font-size:18.5px">(please leave a detailed description)</div>
<div class="inp" style="top:609.6px;height:103.5px"></div>
<div class="ptxt" style="top:757px;line-height:35px;font-size:19.1px">If you consent to being contacted in regards to this<br>submission, please provide your email below:</div>
<div class="inp" style="top:868.3px;height:34.5px"></div>
<div class="ptxt" style="top:947.2px;line-height:31.3px">By continuing you agree that Geotab may use your answers<br>to improve our products subject to our <a>End User Agreement</a>.<br>Geotab will handle personal information subject to our<br><a>Privacy Policy</a>.</div>
<div class="abs" style="left:1468px;top:1128px;width:75px;height:43px;background:#3a78d0;border-radius:5px;color:#fff;font-size:16.5px;line-height:43px;text-align:center">Submit</div>
<div class="abs" style="left:0;top:0;width:1999px;height:3px;background:#fff6e9"></div>
<div class="abs" style="left:0;top:3px;width:1999px;height:1.2px;background:#e8e3d8"></div>
<div class="abs" style="left:0;top:0;width:1.3px;height:1263px;background:#3a4450"></div>
<div class="abs" style="left:0;top:1262px;width:1999px;height:1px;background:#222"></div>
<svg class="abs" style="left:0;top:1250px" width="14" height="13" viewBox="0 0 14 13"><path d="M0 0V13H13A12 12 0 0 1 1.3 1.3V0Z" fill="#2b3038"/></svg>
</div></body></html>
